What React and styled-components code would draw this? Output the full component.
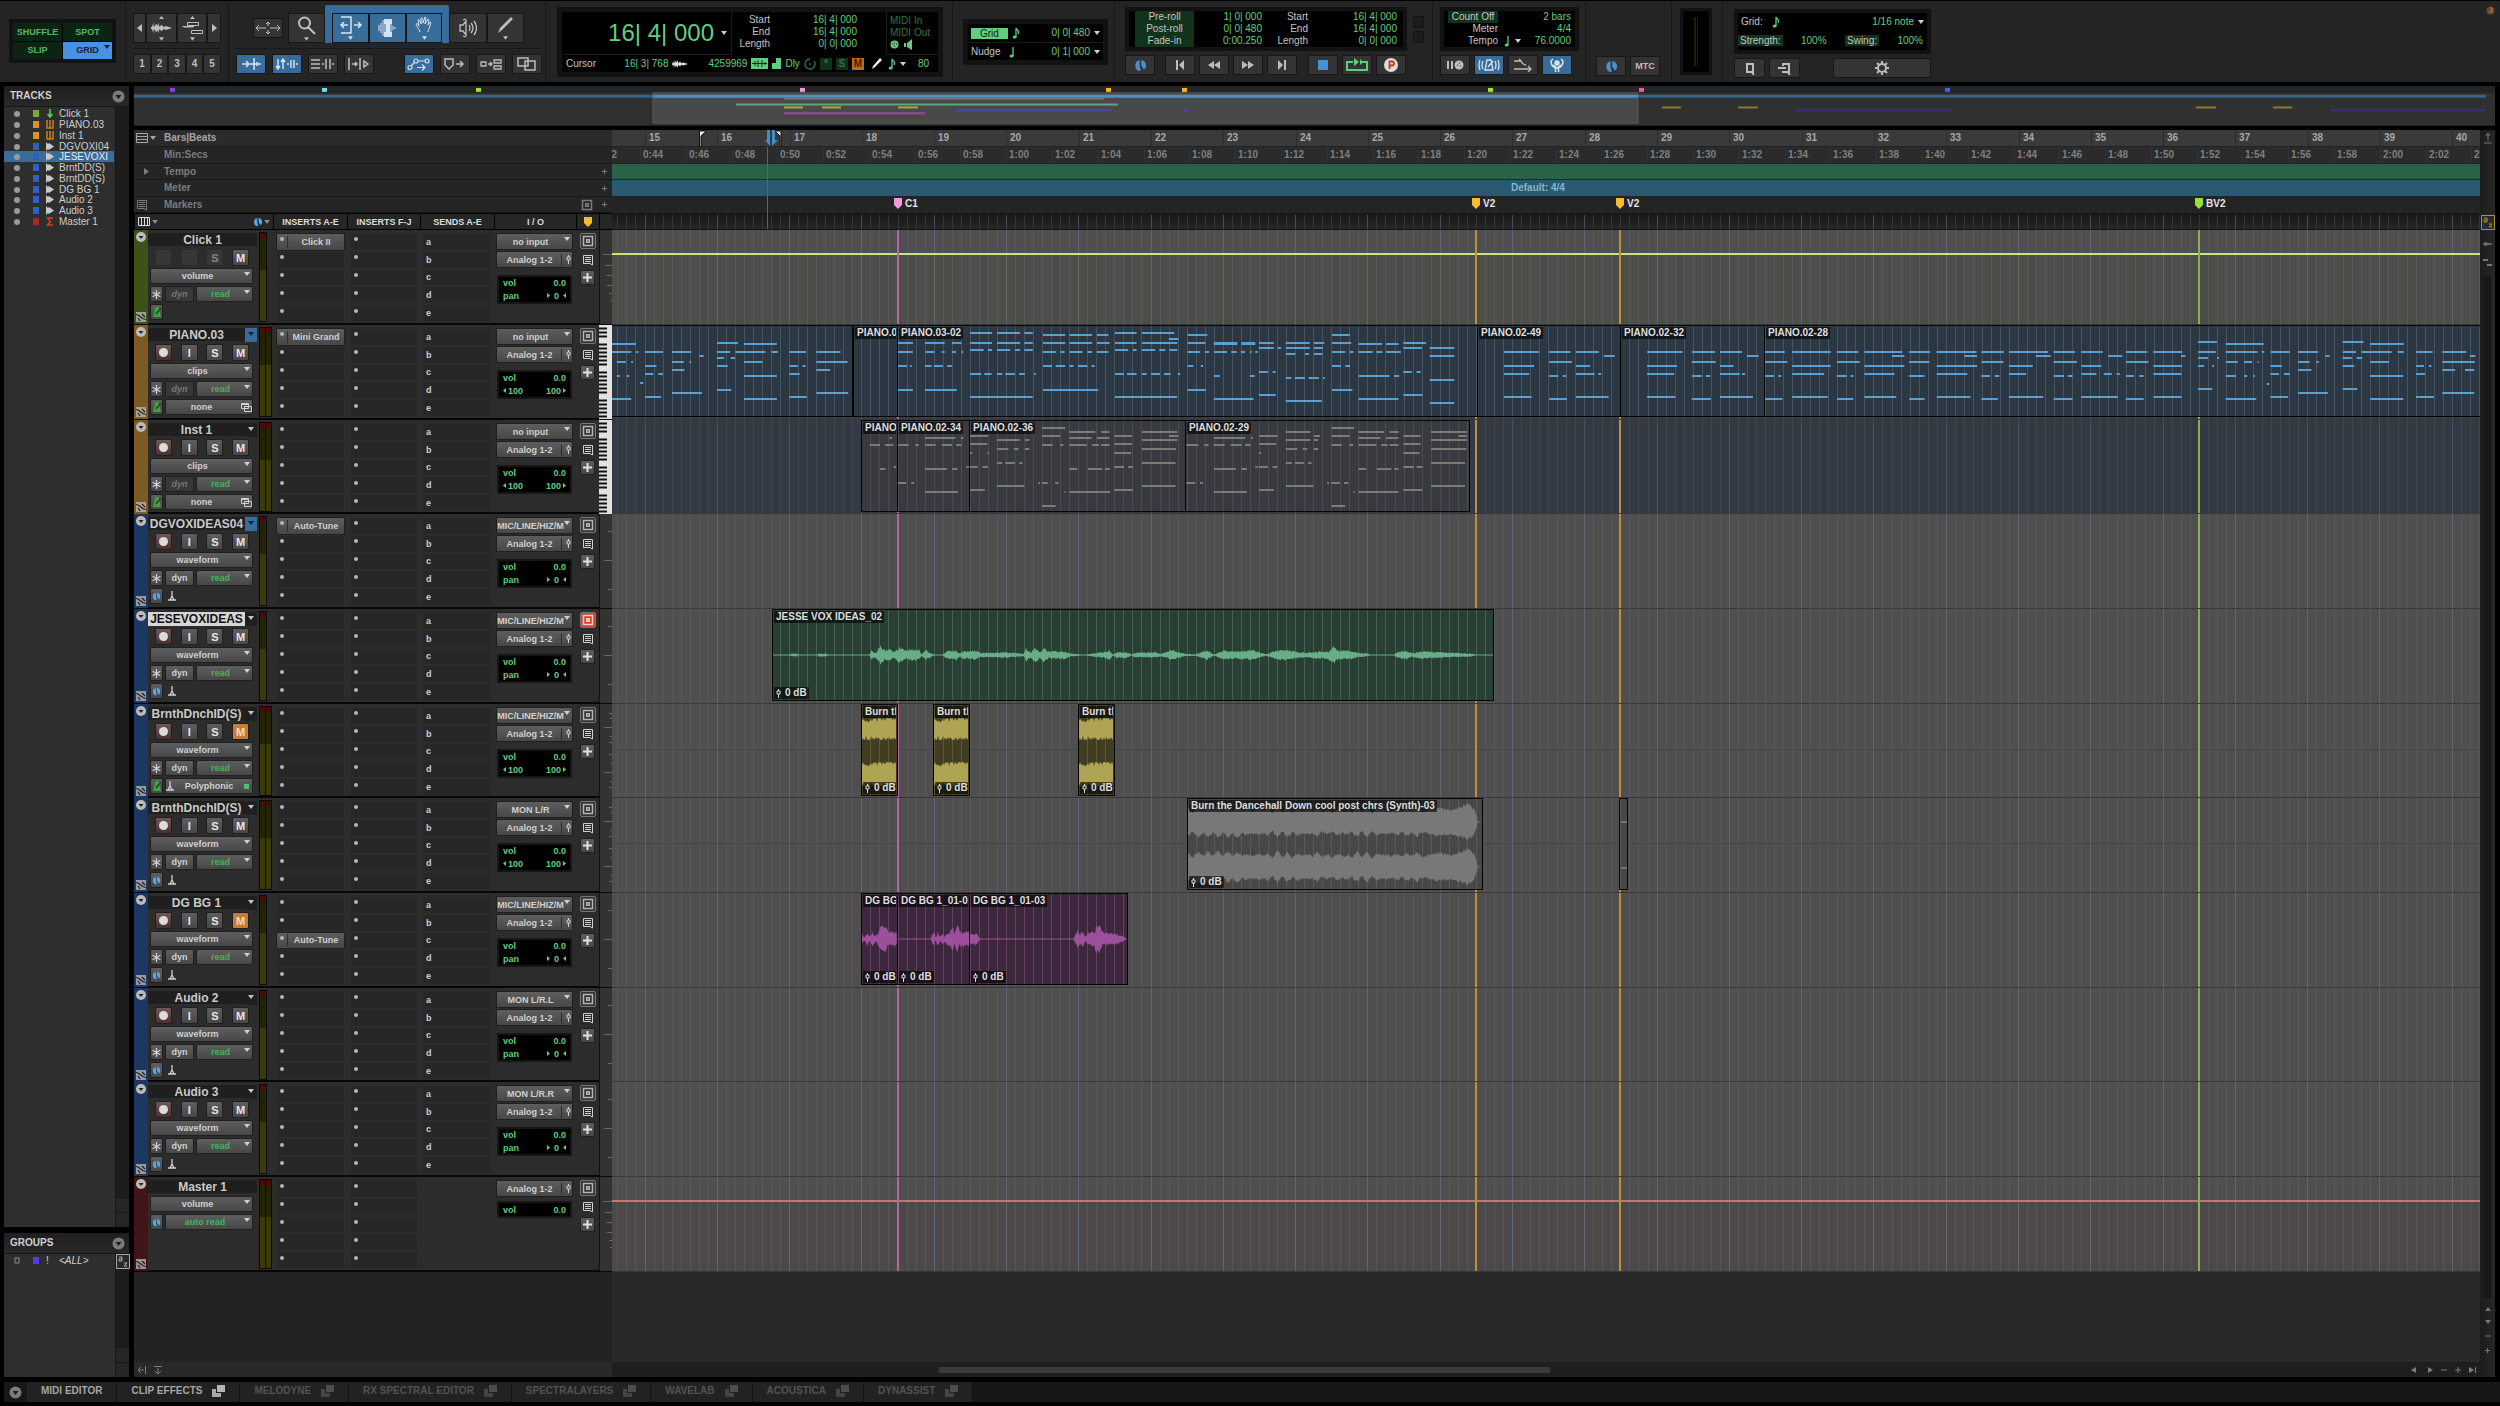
import styled, { createGlobalStyle, css } from "styled-components"

const GlobalStyle = createGlobalStyle`
  * { box-sizing: border-box; }
  body {
    margin: 0;
    background: #000;
    color: #cfcfcf;
    font: 10px/12px "Liberation Sans", Arial, sans-serif;
  }
  button, select, input { font: inherit; color: inherit; margin: 0; padding: 0; border: 0; background: none; }
  svg { display: block; flex: none; }
  h2, h3 { margin: 0; font: inherit; }
  ul { margin: 0; padding: 0; list-style: none; }
`

// timeline scale
const BAR = 72.29
const ORIGIN = 33
const SECOND = BAR / (4 * 60 / 76)

const range = (n) => Array.from({ length: n }, (_, i) => i)
const barX = (bar) => ORIGIN + (bar - 15) * BAR

const vLines = (xs) => xs.map((x) => `M${Math.floor(x) + 0.5} 0V100`).join("")
const GRID_FINE = vLines(range(260).filter((i) => (i - 4) % 8 !== 0).map((i) => ORIGIN + (i - 4) * BAR / 8))
const GRID_BAR = vLines(range(32).map((i) => ORIGIN + i * BAR))

/* ---------- icons ---------- */

const Stroke = ({ w = 16, h = w, d, width = 2, color = "currentColor", fill = "none", box }) => (
  <svg width={w} height={h} viewBox={box || `0 0 ${w} ${h}`} fill={fill} stroke={color} strokeWidth={width}><path d={d}/></svg>
)
const Fill = ({ w = 16, h = w, d, color = "currentColor", box }) => (
  <svg width={w} height={h} viewBox={box || `0 0 ${w} ${h}`} fill={color}><path d={d}/></svg>
)

const Caret = ({ w = 6, color }) => <Fill w={w} h={4} box="0 0 6 4" d="M0 0H6L3 4Z" color={color}/>
const Note = ({ color = "#63cd7f", flag }) => (
  <svg width="8" height="12" viewBox="0 0 8 12">
    <path d={flag ? "M4 10V1C5 4 8 3 6 7" : "M4 10V1"} stroke={color} fill="none" strokeWidth="1.3"/>
    <ellipse cx="2.6" cy="10" rx="2" ry="1.5" fill={color}/>
  </svg>
)
const Clock = ({ size = 10, color = "#55a8ec" }) => (
  <svg width={size} height={size} viewBox="0 0 10 10">
    <path d="M4.3 1A4.2 4.2 0 0 0 5.2 9.3L4.3 5Z" fill={color}/>
    <path d="M5.6 .8A4.2 4.2 0 0 1 7.6 8.3L5.6 5Z" fill={color}/>
  </svg>
)
const Metronome = () => (
  <svg width="10" height="10" viewBox="0 0 10 10">
    <path d="M3.5 0H6.5L9 10H1Z" fill="#38a838"/>
    <path d="M4 7L9 1" stroke="#333" strokeWidth="1.4"/>
  </svg>
)
const Fader = () => <Stroke w={5} h={9} width={1} d="M2.5 0V2M2.5 5V9M1 2H4V5H1Z"/>
const Windows = () => <Stroke w={11} h={9} width={1} d="M.5 .5H7.5V5.5H.5ZM3.5 3.5H10.5V8.5H3.5ZM.5 1.5H7.5"/>
const WaveGlyph = ({ w = 14, h = 12, color }) => (
  <Fill w={w} h={h} box="0 0 20 12" color={color} d="M0 5H1V2L2 5L3 0V5L5 2L6 4L7 1L8 5L10 3L12 5L14 4L20 6L14 8L12 7L10 9L8 7L7 11L6 8L5 10L3 7V12L2 7L1 10V7H0Z"/>
)
const Comment = () => <Stroke w={12} h={12} width={1} d="M1.5 1.5H10.5V11L8 9.5H1.5ZM3 3.5H9M3 5.5H9M3 7.5H9"/>
const Target = () => <Stroke w={12} h={12} width={1.5} d="M1.5 1.5H10.5V10.5H1.5ZM4.7 4.7H7.3V7.3H4.7Z"/>
const Elastic = () => (
  <svg width="10" height="10" viewBox="0 0 10 10">
    <path d="M0 0H10V10H0Z" fill="currentColor" opacity=".75"/>
    <path d="M0 2.5C4 2.5 5 7.5 10 7.5M2 6L4 9M6 2L9 5" stroke="#222" fill="none" strokeWidth="1.2"/>
  </svg>
)
const PopOut = ({ lit }) => (
  <svg width="13" height="12" viewBox="0 0 13 12">
    <path d="M5 0H13V7H5Z" fill={lit ? "#b4b4b4" : "#4c4c4c"}/>
    <path d="M0 4H4V8H9V12H0Z" fill={lit ? "#a8a8a8" : "#444"}/>
  </svg>
)

/* ---------- toolbar ---------- */

const Page = styled.div`
  display: flex;
  flex-direction: column;
  min-height: 100vh;
  overflow: hidden;
`

const Toolbar = styled.header`
  display: flex;
  height: 82px;
  border-top: 1px solid #000;
  background: #242424;
`

const Section = styled.section`
  display: flex;
  flex-direction: column;
  gap: ${(p) => p.$gap || 4}px;
  width: ${(p) => p.$w}px;
  padding: ${(p) => p.$pad || "6px 11px"};
  border-right: ${(p) => (p.$last ? 0 : 1)}px solid #181818;
  flex: none;
`

const Row = styled.div`
  display: flex;
  align-items: center;
  gap: ${(p) => p.$gap || 0}px;
  ${(p) => p.$push && "margin-left: auto;"}
`

const Spacer = styled.i`
  width: ${(p) => p.$w}px;
  flex: none;
`

const Display = styled.div`
  width: ${(p) => (p.$w ? `${p.$w}px` : "auto")};
  border: ${(p) => p.$edge || 4}px solid #121212;
  background: #000;
  color: #63cd7f;
`

const ModeGrid = styled(Display)`
  display: grid;
  grid-template-columns: 1fr 1fr;
  height: 44px;
  margin: 12px 0 0;
  gap: 1px;
`

const Mode = styled.button`
  position: relative;
  background: ${(p) => (p.$on ? "#4a8fe0" : "#0c2413")};
  color: ${(p) => (p.$on ? "#10233c" : "#55b56e")};
  font-size: 9px;
  font-weight: bold;
  & > svg { position: absolute; right: 2px; top: 3px; }
`

const ToolButton = styled.button`
  display: flex;
  flex-direction: column;
  align-items: center;
  justify-content: center;
  gap: 2px;
  width: ${(p) => p.$w || 30}px;
  height: ${(p) => p.$h || 20}px;
  border: 1px solid #171717;
  background: ${(p) => (p.$on ? "#376c9b" : "#343434")};
  color: ${(p) => (p.$on ? "#d5e3ee" : "#bdbdbd")};
  font-size: ${(p) => (p.$small ? 9 : 10)}px;
  font-weight: bold;
`

const SmartTool = styled.div`
  display: flex;
  padding: 8px 7px 0;
  margin-top: -8px;
  border-radius: 2px 2px 0 0;
  background: #376c9b;
`

const Split = styled.hr`
  width: 100%;
  margin: 0;
  border: 0;
  border-top: 1px solid #181818;
`

const Counter = styled(Display)`
  display: grid;
  grid-template-columns: 170px 130px 24px 1fr;
  grid-template-rows: 43px 17px;
  height: 70px;
  border-width: 5px;
`

const MainTime = styled.div`
  display: flex;
  align-items: center;
  justify-content: flex-end;
  gap: 7px;
  padding-right: 4px;
  border-right: 1px solid #1c1c1c;
  border-bottom: 1px solid #1c1c1c;
  font-size: 24px;
  line-height: 24px;
  color: #63cd7f;
`

const Pairs = styled.dl`
  display: grid;
  grid-template-columns: ${(p) => p.$cols || "auto auto"};
  grid-auto-rows: 12px;
  margin: 0;
  padding: ${(p) => p.$pad || 0};
  text-align: right;
  dt { color: #c4c4c4; }
  dd { margin: 0; color: #63cd7f; }
`

const Tag = styled.span`
  padding: 0 ${(p) => p.$x || 3}px;
  background: ${(p) => (p.$solid ? "#63cd7f" : "#11331c")};
  color: ${(p) => (p.$solid ? "#0b2412" : "#63cd7f")};
  text-align: center;
  line-height: 11px;
`

const StatusRow = styled.div`
  display: flex;
  grid-column: 1 / -1;
  align-items: center;
  gap: 4px;
  padding: 0 9px 0 4px;
  color: #63cd7f;
  span:first-child { color: #c4c4c4; margin-right: auto; }
`

const StatusBox = styled.span`
  width: 12px;
  height: 12px;
  text-align: center;
  background: ${(p) => (p.$hot ? "#c0691c" : "#10301a")};
  color: ${(p) => (p.$hot ? "#3c1c00" : "#2f7442")};
  font-weight: bold;
`

const MidiStatus = styled.div`
  padding: 3px 0 0 3px;
  color: #2f7442;
  white-space: nowrap;
  border-left: 1px solid #1c1c1c;
  border-bottom: 1px solid #1c1c1c;
`

const GridRow = styled.div`
  display: flex;
  align-items: center;
  gap: 4px;
  height: 18px;
  padding: 0 3px;
  & + & { border-top: 1px solid #1c1c1c; }
  span:last-of-type { margin-left: auto; }
`

const Strength = styled.div`
  display: flex;
  align-items: center;
  justify-content: space-between;
  height: 19px;
  padding-right: 4px;
`

const Name = styled.span`
  color: #c4c4c4;
  ${(p) => p.$w && `width: ${p.$w}px;`}
`

const LevelMeter = styled.div`
  display: flex;
  gap: 1px;
  width: 32px;
  height: 69px;
  padding: 6px 11px;
  border: 3px solid #121212;
  background: #000;
  i { flex: 1; background: linear-gradient(#4a0a0a 3px, #1d1f08 3px); }
`

const Grow = styled.div`
  flex: 1;
`

const Corner = styled.div`
  padding: 5px;
`

const bars = (x) => `M${x} 7V13M${x + 2} 5V15M${x + 4} 2V18M${x + 6} 4V16M${x + 8} 1V19M${x + 10} 6V14M${x + 12} 4V16M${x + 14} 8V12M${x + 16} 9V11`

function TopBar() {
  return (
    <Toolbar>
      <Section $w={126} $pad="6px 9px">
        <ModeGrid>
          <Mode>SHUFFLE</Mode>
          <Mode>SPOT</Mode>
          <Mode>SLIP</Mode>
          <Mode $on>GRID<Caret color="#10233c"/></Mode>
        </ModeGrid>
      </Section>

      <Section $w={103} $pad="12px 7px" $gap={5}>
        <Row>
          <ToolButton $w={13} $h={30} aria-label="zoom out"><Fill w={5} h={8} d="M5 0V8L0 4Z"/></ToolButton>
          <ToolButton $w={31} $h={30} aria-label="zoom waveform">
            <Fill w={5} h={3} d="M0 3L2.5 0L5 3Z"/>
            <WaveGlyph w={21} h={14}/>
            <Caret w={5}/>
          </ToolButton>
          <ToolButton $w={30} $h={30} aria-label="zoom midi">
            <Fill w={5} h={3} d="M0 3L2.5 0L5 3Z"/>
            <Stroke w={21} h={14} width={1} d="M5.5 1.5H16.5V4.5H5.5ZM.5 5.5H12M1.5 6H11M9.5 9.5H20.5V12.5H9.5Z"/>
            <Caret w={5}/>
          </ToolButton>
          <ToolButton $w={14} $h={30} aria-label="zoom in"><Fill w={5} h={8} d="M0 0V8L5 4Z"/></ToolButton>
        </Row>
        <Split/>
        <Row>
          {[1, 2, 3, 4, 5].map((n) => <ToolButton key={n} $w={n % 2 ? 18 : 17}>{n}</ToolButton>)}
        </Row>
      </Section>

      <Section $w={317} $pad="12px 3px 12px 7px" $gap={5}>
        <Row>
          <Row $gap={5}>
            <Spacer $w={12}/>
            <ToolButton aria-label="trim"><Stroke w={26} h={14} width={1} d="M1 7H11M4 4L1 7L4 10M15 7H25M22 4L25 7L22 10M13 1V5M11 3L13 1L15 3M13 9V13M11 11L13 13L15 11"/></ToolButton>
            <ToolButton $w={37} $h={30} aria-label="zoomer">
              <Stroke w={20} h={19} width={2} d="M13 7A5.5 5.5 0 1 1 2 7A5.5 5.5 0 1 1 13 7M11 11L18 18"/>
              <Caret w={5}/>
            </ToolButton>
          </Row>
          <SmartTool>
            <ToolButton $on $w={37} $h={30} aria-label="trimmer">
              <Stroke w={24} h={18} width={1.5} d="M2 1H12V17H2M9 9H2M5 6L2 9L5 12M15 9H22M19 6L22 9L19 12"/>
              <Caret w={5}/>
            </ToolButton>
            <ToolButton $on $w={37} $h={30} aria-label="selector">
              <svg width="22" height="20" viewBox="0 0 22 20" fill="#d5e3ee"><path d="M7 1H15V6H13V14H15V19H7V14H9V6H7Z"/><path d={bars(2)} stroke="#d5e3ee"/></svg>
            </ToolButton>
            <ToolButton $on $w={36} $h={30} aria-label="grabber">
              <Stroke w={18} h={18} width={1} d="M5 16C4 12 1 10 1 8C2 7 3 8 4 10L3 4C4 3 5 4 6 8L6 2C7 1 8 2 8 7L10 1C11 1 11 2 10 8L13 3C14 3 14 4 13 9L15 6C16 6 16 7 15 10C14 13 13 14 13 16"/>
              <Caret w={5}/>
            </ToolButton>
          </SmartTool>
          <ToolButton $w={38} $h={30} aria-label="scrubber"><Stroke w={18} h={20} width={1.3} d="M1 7H4L7 3V17L4 13H1ZM4 2L7 1M4 18L7 19M10 7Q12 10 10 13M12 5Q16 10 12 15M15 3Q20 10 15 17"/></ToolButton>
          <ToolButton $w={37} $h={30} aria-label="pencil">
            <Fill w={16} h={18} d="M0 17L2 12L13 1L15 3L4 14Z"/>
            <Caret w={5}/>
          </ToolButton>
        </Row>
        <Split/>
        <Row $gap={6}>
          <ToolButton $on aria-label="tab to transient"><Stroke w={20} h={14} width={1.5} d="M1 7H8M5 4L8 7L5 10M9 7H20M13 1V13M16 5V9"/></ToolButton>
          <ToolButton $on aria-label="link track"><Stroke w={24} h={14} width={1.5} d="M3 2V12M1 9L3 12L5 9M8 12V2M6 5L8 2L10 5M12 7H14M16 3V11M19 3V11M21 7H23"/></ToolButton>
          <ToolButton aria-label="mirror"><Stroke w={24} h={14} width={1.5} d="M0 3H9M0 7H9M0 11H9M11 7H13M15 2V12M19 2V12M21 7H23"/></ToolButton>
          <ToolButton aria-label="insertion follows"><Stroke w={22} h={14} width={1.5} d="M1 1V13M4 7H9M7 5L9 7L7 9M12 1V13M16 4L20 7L16 10Z"/></ToolButton>
          <Grow/>
          <ToolButton $on aria-label="automation follows">
            <Stroke w={24} h={14} width={1.2} d="M1 10.5A2 2 0 1 0 5 10.5A2 2 0 1 0 1 10.5M7 4A2 2 0 1 0 11 4A2 2 0 1 0 7 4M18 4A2 2 0 1 0 22 4A2 2 0 1 0 18 4M4 9L7.5 5.5M11 4H18M10 10.5H18M15 7.5L18 10.5L15 13.5"/>
          </ToolButton>
          <ToolButton aria-label="track marker"><Stroke w={22} h={14} width={1.5} d="M1 2H9V8L5 12L1 8ZM12 7H19M16 4L19 7L16 10"/></ToolButton>
          <ToolButton aria-label="group"><Stroke w={22} h={14} width={1.3} d="M1 5H6V9H1ZM8 7H12M10 5L12 7L10 9M14 3H21V6H14ZM14 9H21V12H14Z"/></ToolButton>
          <ToolButton aria-label="layered editing"><Stroke w={20} h={14} width={1.5} d="M1 1H11V9H1ZM8 4H18V13H8Z"/></ToolButton>
        </Row>
      </Section>

      <Section $w={407} $pad="6px 9px 6px 11px">
        <Counter>
          <MainTime>16| 4| 000 <Caret color="#cfcfcf"/></MainTime>
          <Pairs $cols="38px 1fr" $pad="2px 5px 0 0">
            <dt>Start</dt><dd>16| 4| 000</dd>
            <dt>End</dt><dd>16| 4| 000</dd>
            <dt>Length</dt><dd>0| 0| 000</dd>
          </Pairs>
          <span/>
          <MidiStatus>
            MIDI In<br/>MIDI Out
            <Row $gap={5}>
              <svg width="9" height="9"><circle cx="4.5" cy="4.5" r="4" fill="#63cd7f"/><path d="M2 4H3M4 3H5M6 4H7M4 6H5" stroke="#000"/></svg>
              <Fill w={9} h={11} color="#63cd7f" d="M0 4H2V8H0ZM3 4L8 0V11L3 8Z"/>
            </Row>
          </MidiStatus>
          <StatusRow>
            <span>Cursor</span>
            <span>16| 3| 768</span>
            <WaveGlyph w={16} h={10} color="#ddd"/>
            <Spacer $w={12}/>
            <span>4259969</span>
            <svg width="17" height="11"><path d="M0 0H17V11H0Z" fill="#63cd7f"/><path d="M1 5.5H16M4 3V8M7 2V9M11 2V9M14 4V7" stroke="#10301a"/></svg>
            <Fill w={9} h={11} color="#63cd7f" d="M4 0H9V11H0V5H4Z"/>
            <span>Dly</span>
            <Stroke w={12} color="#2f7442" width={1.3} d="M6 1A5 5 0 1 0 10 3M6 5V7"/>
            <StatusBox>*</StatusBox>
            <StatusBox>S</StatusBox>
            <StatusBox $hot>M</StatusBox>
            <Fill w={16} h={11} box="-4 0 16 11" color="#eee" d="M0 11L1 8L8 0L10 2L3 9Z"/>
            <Note flag/>
            <Caret color="#cfcfcf"/>
            <Spacer $w={4}/>
            <span>80</span>
          </StatusRow>
        </Counter>
      </Section>

      <Section $w={162} $pad="18px 6px 0 10px">
        <Display $edge={5}>
          <GridRow><Tag $solid $x={9}>Grid</Tag><Note flag/><span>0| 0| 480</span><Caret color="#cfcfcf"/></GridRow>
          <GridRow><Name $w={34}>Nudge</Name><Note/><span>0| 1| 000</span><Caret color="#cfcfcf"/></GridRow>
        </Display>
      </Section>

      <Section $w={318} $pad="6px 8px 6px 10px">
        <Row $gap={6}>
          <Display $w={282}>
            <Pairs $cols="59px 68px 46px 1fr" $pad="0 6px 0 6px">
              <Tag as="dt">Pre-roll</Tag><dd>1| 0| 000</dd><dt>Start</dt><dd>16| 4| 000</dd>
              <Tag as="dt">Post-roll</Tag><dd>0| 0| 480</dd><dt>End</dt><dd>16| 4| 000</dd>
              <Tag as="dt">Fade-in</Tag><dd>0:00.250</dd><dt>Length</dt><dd>0| 0| 000</dd>
            </Pairs>
          </Display>
          <svg width="11" height="27"><path d="M.5 .5H10.5V11.5H.5ZM.5 15.5H10.5V26.5H.5Z" fill="#1c1c1c" stroke="#121212"/></svg>
        </Row>
        <Row $gap={4}>
          <ToolButton aria-label="online"><Clock size={13} color="#4a8fce"/></ToolButton>
          <Spacer $w={2}/>
          <ToolButton aria-label="return to zero"><Fill w={8} h={10} d="M0 0H2V10H0ZM8 0V10L3 5Z"/></ToolButton>
          <ToolButton aria-label="rewind"><Fill w={12} h={8} d="M6 0V8L0 4ZM12 0V8L6 4Z"/></ToolButton>
          <ToolButton aria-label="fast forward"><Fill w={12} h={8} d="M0 0V8L6 4ZM6 0V8L12 4Z"/></ToolButton>
          <ToolButton aria-label="go to end"><Fill w={8} h={10} d="M6 0H8V10H6ZM0 0V10L5 5Z"/></ToolButton>
          <Spacer $w={3}/>
          <ToolButton aria-label="stop"><Fill w={10} color="#4a8fce" d="M0 0H10V10H0Z"/></ToolButton>
          <ToolButton aria-label="loop playback">
            <svg width="22" height="14" viewBox="0 0 22 14"><path d="M7 4H1V12H21V4H15" fill="none" stroke="#63cd7f" strokeWidth="2"/><path d="M8 0L13 4L8 8ZM14 1V7L17 4Z" fill="#63cd7f"/></svg>
          </ToolButton>
          <ToolButton aria-label="record"><svg width="14" height="14"><circle cx="7" cy="7" r="7" fill="#dcdcdc"/><path d="M5.5 11V3.5H8A2 2 0 0 1 8 7.5H6" stroke="#c23b28" strokeWidth="1.8" fill="none"/></svg></ToolButton>
        </Row>
      </Section>

      <Section $w={153} $pad="6px 6px 6px 7px">
        <Display>
          <Pairs $cols="50px 30px 1fr" $pad="0 4px 0 4px">
            <Tag as="dt" $x={1}>Count Off</Tag><dt/><dd>2 bars</dd>
            <dt>Meter</dt><dt/><dd>4/4</dd>
            <dt>Tempo</dt><dt><Row $gap={3} $push><Spacer $w={3}/><Note/><Caret color="#cfcfcf"/></Row></dt><dd>76.0000</dd>
          </Pairs>
        </Display>
        <Row $gap={4}>
          <ToolButton aria-label="wait for note"><svg width="18" height="12" fill="#bdbdbd"><path d="M1 2H3V10H1ZM5 2H7V10H5Z"/><circle cx="13" cy="6" r="4.5"/><path d="M11 6H12M13 4H14M14 7H15" stroke="#333"/></svg></ToolButton>
          <ToolButton $on aria-label="metronome"><Stroke w={22} h={14} width={1.3} d="M9 2H13L15 12H7ZM10 9L15 3M5 3Q3 7 5 11M2 2Q0 7 2 12M17 3Q19 7 17 11M20 2Q22 7 20 12"/></ToolButton>
          <ToolButton aria-label="midi merge"><Stroke w={18} h={14} width={1.3} d="M0 3H7Q9 7 12 7M5 1L7 3M0 11H17M14 8L17 11L14 14"/></ToolButton>
          <ToolButton $on aria-label="tempo map">
            <svg width="16" height="16" viewBox="0 0 16 16" fill="none" stroke="#d5e3ee" strokeWidth="1.5"><path d="M6.5 15V11Q2 9 2 4L4 2M9.5 15V11Q14 9 14 4L12 2M4 8L8 11L12 8"/><circle cx="8" cy="6" r="2" fill="#d5e3ee"/></svg>
          </ToolButton>
        </Row>
      </Section>

      <Section $w={86} $pad="55px 10px 0">
        <Row $gap={4}>
          <ToolButton aria-label="sync"><Clock size={13} color="#4a8fce"/></ToolButton>
          <ToolButton $small>MTC</ToolButton>
        </Row>
      </Section>

      <Section $w={51} $pad="7px 8px">
        <LevelMeter><i/><i/></LevelMeter>
      </Section>

      <Section $last $w={219} $pad="8px 11px" $gap={4}>
        <Display>
          <GridRow><Name>Grid:</Name><Spacer $w={1}/><Note flag/><span>1/16 note</span><Caret color="#cfcfcf"/></GridRow>
          <Strength>
            <Tag $x={2}><Name>Strength:</Name></Tag><span>100%</span>
            <Tag $x={2}><Name>Swing:</Name></Tag><span>100%</span>
          </Strength>
        </Display>
        <Row $gap={4}>
          <ToolButton $w={31} aria-label="quantize"><Stroke w={10} h={13} width={2} d="M2 2H8V10H2ZM6 9L9 13"/></ToolButton>
          <ToolButton $w={31} aria-label="apply quantize"><Stroke w={14} h={13} width={2} d="M5 4V2H11V10H5V9M9 9L12 13M0 6H8"/></ToolButton>
          <Grow/>
          <ToolButton $w={98} aria-label="settings">
            <Stroke w={14} h={14} width={2} d="M7 3A4 4 0 1 1 7 11A4 4 0 1 1 7 3M7 0V3M7 11V14M0 7H3M11 7H14M2 2L4 4M10 10L12 12M2 12L4 10M10 4L12 2"/>
          </ToolButton>
        </Row>
      </Section>
      <Grow/>
      <Corner>
        <svg width="9" height="9"><circle cx="4.5" cy="4.5" r="4" fill="#6a452c"/><path d="M4 2H6V6H3" stroke="#b67a4e" fill="none"/></svg>
      </Corner>
    </Toolbar>
  )
}

/* ---------- sidebar ---------- */

const Body = styled.div`
  display: flex;
  flex: 1;
  gap: 5px;
  padding: 4px 5px 5px 4px;
`

const Sidebar = styled.aside`
  display: flex;
  flex-direction: column;
  gap: 6px;
  width: 125px;
  flex: none;
`

const Panel = styled.section`
  display: flex;
  flex-direction: column;
  ${(p) => (p.$h ? `height: ${p.$h}px;` : "flex: 1;")}
  background: #2e2e2e;
`

const PanelHead = styled.h2`
  display: flex;
  align-items: center;
  justify-content: space-between;
  height: 21px;
  padding: 0 4px 0 6px;
  border-bottom: 1px solid #161616;
  background: linear-gradient(#1f1f1f, #282828);
  font-weight: bold;
`

const PanelBody = styled.div`
  display: flex;
  flex: 1;
`

const TrackNames = styled.ul`
  flex: 1;
  padding-top: 1px;
  margin-right: 1px;
`

const TrackName = styled.li`
  display: grid;
  grid-template-columns: 23px 9px 13px 1fr;
  align-items: center;
  height: 11px;
  padding-left: 10px;
  line-height: 11px;
  white-space: nowrap;
  &:nth-child(4n) { height: 10px; }
  ${(p) => p.$on && "background: #376c9b; color: #e4edf4;"}
`

const Dot = styled.i`
  width: 6px;
  height: 6px;
  border-radius: 50%;
  background: #9a9a9a;
`

const Swatch = styled.i`
  width: 6px;
  height: 7px;
  margin-left: -4px;
  background: ${(p) => p.$c};
`

const Gutter = styled.div`
  width: 14px;
  background: #1d1d1d;
  border-left: 1px solid #161616;
  display: flex;
  flex-direction: column;
  justify-content: flex-end;
`

const GutterEnd = styled.i`
  height: 15px;
  border-top: 1px solid #161616;
  background: #262626;
`

const MenuDot = () => (
  <svg width="13" height="13" viewBox="0 0 13 13"><circle cx="6.5" cy="6.5" r="6" fill="#7b7b7b"/><path d="M3.5 5H9.5L6.5 9Z" fill="#1a1a1a"/></svg>
)
const SortBadge = ({ c = "#aaa" }) => (
  <svg width="14" height="15" viewBox="0 0 14 15">
    <path d="M.5 .5H13.5V14.5H.5Z" fill="#2a2a2a" stroke={c}/>
    <path d="M3 3H6V7H3V5H6M8 9H11L8 12H11" stroke={c} fill="none"/>
  </svg>
)

const listIcons = {
  click: <Stroke w={8} h={9} width={1.5} color="#59dd4c" d="M4 0V8M1.5 5L4 8L6.5 5"/>,
  inst: <Stroke w={8} h={9} width={1.5} color="#cf7c22" d="M1 0V8H7V0M4 0V8"/>,
  audio: <Fill w={8} h={9} color="#c8c8c8" d="M0 0L2 2L3 1L8 4.5L3 8L2 7L0 9Z"/>,
  master: <Stroke w={8} h={9} width={1.6} color="#e03b1f" d="M7 1H1.5L4.5 4.5L1.5 8H7"/>,
}

const trackList = [
  ["Click 1", "#7bab2d", "click"], ["PIANO.03", "#dd8f2b", "inst"], ["Inst 1", "#dd8f2b", "inst"],
  ["DGVOXI04", "#2b5fc4", "audio"], ["JESEVOXI", "#2b5fc4", "audio"], ["BrntDD(S)", "#2b5fc4", "audio"],
  ["BrntDD(S)", "#2b5fc4", "audio"], ["DG BG 1", "#2b5fc4", "audio"], ["Audio 2", "#2b5fc4", "audio"],
  ["Audio 3", "#2b5fc4", "audio"], ["Master 1", "#a82a20", "master"],
]

function SideBar() {
  return (
    <Sidebar>
      <Panel>
        <PanelHead>TRACKS <MenuDot/></PanelHead>
        <PanelBody>
          <TrackNames>
            {trackList.map(([name, color, kind], i) => (
              <TrackName key={i} $on={name === "JESEVOXI"}>
                <Dot/><Swatch $c={color}/>{listIcons[kind]}<span>{name}</span>
              </TrackName>
            ))}
          </TrackNames>
          <Gutter><GutterEnd/><GutterEnd/></Gutter>
        </PanelBody>
      </Panel>
      <Panel $h={144}>
        <PanelHead>GROUPS <MenuDot/></PanelHead>
        <PanelBody>
          <TrackNames>
            <TrackName><Stroke w={6} h={7} width={1} color="#8a8a8a" d="M1 1H5V6H1Z"/><Swatch $c="#5536f2"/><span>!</span><i>&lt;ALL&gt;</i></TrackName>
          </TrackNames>
          <Gutter><SortBadge/><Grow/><GutterEnd/><GutterEnd/></Gutter>
        </PanelBody>
      </Panel>
    </Sidebar>
  )
}

/* ---------- overview ---------- */

const OverviewBox = styled.div`
  height: 40px;
  background: #303030;
  border-bottom: 1px solid #222;
  svg { width: 100%; height: 100%; }
`

const overviewMarks = [[170, "#8f3ee0"], [322, "#6fdcec"], [476, "#9fe23c"], [800, "#ef9ad8"], [1106, "#f3b62e"], [1182, "#f3b62e"], [1488, "#9fe23c"], [1639, "#ec5f9b"], [1945, "#4d5cf0"]]
const overviewClips = [
  [784, 1104, 12, "#77716e"], [736, 1118, 18, "#5da77a"],
  [784, 803, 21, "#b2a449"], [822, 841, 21, "#b2a449"], [898, 918, 21, "#b2a449"],
  [956, 1111, 24, "#4f42ab"], [1184, 1189, 24, "#4f42ab"], [784, 925, 27, "#a5449f"],
  [1662, 1681, 21, "#877b33"], [1738, 1758, 21, "#877b33"], [2196, 2216, 21, "#877b33"], [2273, 2292, 21, "#877b33"],
  [1795, 1952, 24, "#3b2f7c"], [2330, 2486, 24, "#3b2f7c"],
]

function Overview() {
  return (
    <OverviewBox>
      <svg viewBox="0 0 2361 40" preserveAspectRatio="none">
        <rect width="2361" height="7" fill="#252525"/>
        <rect x="519" y="7" width="985" height="31" fill="#494949" stroke="#5a5a5a"/>
        <rect y="9" width="2352" height="3" fill="#35648a"/>
        <rect x="519" y="9" width="985" height="3" fill="#4f90c4"/>
        {overviewClips.map(([a, b, y, c], i) => <rect key={i} x={a - 134} y={y} width={b - a} height="2" fill={c}/>)}
        {overviewMarks.map(([x, c]) => <rect key={x} x={x - 134} y="2" width="5" height="4" fill={c}/>)}
      </svg>
    </OverviewBox>
  )
}

/* ---------- track headers ---------- */

const Main = styled.main`
  display: flex;
  flex-direction: column;
  gap: 4px;
  flex: 1;
  min-width: 0;
`

const Edit = styled.div`
  display: grid;
  grid-template-columns: 478px 1fr 15px;
  flex: 1;
`

const Column = styled.div`
  display: flex;
  flex-direction: column;
  min-width: 0;
  position: relative;
  background: ${(p) => p.$bg || "#232323"};
`

const rulerRows = css`
  display: grid;
  grid-template-rows: 17px 17px 16px 17px 16px;
`

const RulerNames = styled.ul`
  ${rulerRows}
`

const RulerName = styled.li`
  display: grid;
  grid-template-columns: 28px 1fr 16px 15px;
  align-items: center;
  padding-left: 2px;
  border-bottom: 1px solid #191919;
  background: ${(p) => (p.$on ? "#2b2b2b" : "#252525")};
  color: ${(p) => (p.$on ? "#a5a5a5" : "#7c7c7c")};
  font-weight: bold;
  & > svg:last-child { justify-self: center; }
`

const ColumnHeads = styled.div`
  display: grid;
  grid-template-columns: 126px 13px 74px 73px 74px 82px 23px 13px;
  height: 17px;
  background: #000;
  font-size: 9px;
  font-weight: bold;
  color: #dcdcdc;
  text-align: center;
`

const ColumnHead = styled.div`
  display: flex;
  align-items: center;
  justify-content: ${(p) => (p.$wide ? "space-between" : "center")};
  margin: 1px 0 1px 1px;
  padding: 0 ${(p) => (p.$wide ? 3 : 0)}px;
  background: #262626;
  ${(p) => p.$wide && "grid-column: span 2;"}
`

const rowHeight = css`
  height: 95px;
  &:nth-child(3n) { height: 94px; }
`

const Strip = styled.article`
  ${rowHeight}
  display: grid;
  grid-template-columns: 14px 111px 14px 74px 73px 74px 82px 23px 13px;
  border-bottom: 2px solid #070707;
  background: #2c2c2c;
  font-size: 9px;
  font-weight: bold;
`

const ColorTab = styled.div`
  display: flex;
  flex-direction: column;
  justify-content: space-between;
  align-items: center;
  padding: 2px 0 2px;
  background: ${(p) => p.$c};
  color: #bbb;
`

const Controls = styled.div`
  display: flex;
  flex-direction: column;
  gap: 4px;
  padding: 3px 7px 0 3px;
`

const NameBar = styled.h3`
  display: flex;
  align-items: center;
  height: 13px;
  margin: 0 -5px 0 -3px;
  background: #1f1f1f;
  color: #c9c9c9;
  font-size: 12px;
  font-weight: bold;
  span {
    flex: 1;
    height: 14px;
    line-height: 14px;
    text-align: center;
    white-space: nowrap;
    ${(p) => p.$on && "background: #d6d6d6; color: #111;"}
  }
`

const NameMenu = styled.button`
  display: flex;
  align-items: flex-start;
  justify-content: center;
  width: 12px;
  height: 14px;
  padding-top: 4px;
  background: ${(p) => (p.$on ? "#376c9b" : "#1f1f1f")};
  color: ${(p) => (p.$on ? "#10233c" : "#c4c4c4")};
`

const raised = css`
  border-radius: 1px;
  background: linear-gradient(#5e5e5e, #474747);
  box-shadow: 0 0 0 1px #1f1f1f;
  color: #d0d0d0;
`

const Squares = styled.div`
  display: flex;
  justify-content: space-between;
  padding: 0 4px 0 5px;
`

const Square = styled.button`
  ${raised}
  display: flex;
  align-items: center;
  justify-content: center;
  width: 15px;
  height: 15px;
  font-size: 11px;
  font-weight: bold;
  color: #e6e6e6;
  ${(p) => p.$rec && "background: linear-gradient(#705756, #4a2f2e);"}
  ${(p) => p.$hot && "background: #cb7c33; color: #f3dcc0;"}
  ${(p) => p.$off && "background: #373737; box-shadow: none; color: #888;"}
`

const Line = styled.div`
  display: flex;
  gap: 4px;
  height: ${(p) => p.$h || 14}px;
`

const Key = styled.button`
  ${raised}
  display: flex;
  align-items: center;
  justify-content: center;
  flex: ${(p) => (p.$w ? "none" : 1)};
  width: ${(p) => p.$w || 0}px;
  height: ${(p) => p.$h || 14}px;
  gap: 4px;
  ${(p) => p.$dim && "background: #383838; color: #777; font-style: italic;"}
`

const Menu = styled.label`
  ${raised}
  position: relative;
  display: block;
  flex: 1;
  min-width: 0;
  height: ${(p) => p.$h || 14}px;
  &::after {
    content: "";
    position: absolute;
    top: 3px;
    right: 2px;
    border: 3px solid transparent;
    border-top: 4px solid #d0d0d0;
    border-bottom: 0;
    pointer-events: none;
  }
  select {
    appearance: none;
    width: 100%;
    height: 100%;
    padding-right: 8px;
    font-weight: bold;
    color: ${(p) => (p.$green ? "#4db05c" : "#d0d0d0")};
    text-align-last: center;
  }
`

const Dropdown = ({ label, value, ...rest }) => (
  <Menu {...rest}><select aria-label={label} defaultValue={value}><option>{value}</option></select></Menu>
)

const Meter = styled.div`
  display: flex;
  gap: 1px;
  width: ${(p) => (p.$stereo ? 13 : 8)}px;
  margin: 2px 0 2px;
  padding: 1px;
  background: #0a0a0a;
  i { flex: 1; background: linear-gradient(#4a0a0a 5px, #222405 5px, #222405 42%, #3b3a0a 42%); }
`

const Slots = styled.div`
  display: grid;
  grid-template-rows: repeat(5, 1fr);
  padding: 4px 3px 1px ${(p) => p.$left || 4}px;
`

const Slot = styled.div`
  display: flex;
  align-items: center;
  padding-left: 3px;
  margin-bottom: 2px;
  background: #272727;
  i { width: 4px; height: 4px; margin-bottom: 5px; border-radius: 50%; background: #b5b5b5; }
`

const Insert = styled.button`
  ${raised}
  display: flex;
  align-items: center;
  padding-left: 3px;
  margin-bottom: 2px;
  i { width: 4px; height: 4px; margin-bottom: 5px; border-radius: 50%; background: #b5b5b5; }
  span { flex: 1; margin-left: 3px; border-left: 1px solid #2c2c2c; font-weight: bold; white-space: nowrap; }
`

const IO = styled.div`
  display: flex;
  flex-direction: column;
  gap: 3px;
  padding: 4px 4px 0 3px;
`

const Analog = styled(Key)`
  flex: none;
  width: 100%;
  height: 15px;
  padding: 0 1px;
  span { flex: 1; border-right: 1px solid #2c2c2c; font-weight: bold; }
`

const Readout = styled.div`
  display: grid;
  grid-template-columns: auto 1fr auto;
  align-items: center;
  height: ${(p) => (p.$single ? 17 : 29)}px;
  margin-top: ${(p) => (p.$single ? 2 : 5)}px;
  padding: 0 4px;
  border: 2px solid #161616;
  background: #000;
  color: #63cd7f;
  span { text-align: right; white-space: nowrap; }
  span:first-child { text-align: left; }
`

const Knob = styled.span`
  display: flex;
  align-items: center;
  gap: 2px;
`

const SideButtons = styled.div`
  display: flex;
  flex-direction: column;
  align-items: center;
  gap: 5px;
  padding-top: 3px;
`

const TargetButton = styled.button`
  display: flex;
  align-items: center;
  justify-content: center;
  width: 16px;
  height: 16px;
  border: 1px solid #777;
  border-radius: 2px;
  background: ${(p) => (p.$hot ? "#d1402c" : "#333")};
  color: ${(p) => (p.$hot ? "#ffd5cc" : "#b4b4b4")};
`

const tickSets = {
  click: "M4 24.5H13M6 35.5H13M7 45.5H13M8 55.5H13M10 63.5H13M11 70.5H13",
  mono: "M9 17.5H13M5 46.5H13M9 75.5H13",
  stereo: "M10 9.5H13M11 14.5H13M5 23.5H13M11 32.5H13M10 38.5H13M10 50.5H13M11 59.5H13M5 68.5H13M11 77.5H13M10 83.5H13",
}

const Scale = ({ kind }) => (
  kind === "keys" ? (
    <svg width="13" height="94" viewBox="0 0 13 94">
      <path d="M0 0H13V94H0Z" fill="#e2e2e2"/>
      <path d={range(23).filter((i) => i % 7 !== 3).map((i) => `M0 ${i * 4 + 3.5}H8`).join("")} stroke="#111" strokeWidth="2"/>
    </svg>
  ) : (
    <svg width="13" height="94" viewBox="0 0 13 94">
      <path d="M0 0H13V94H0Z" fill="#333"/>
      <path d="M0 0H1V94H0Z" fill="#111"/>
      <path d={tickSets[kind]} stroke="#666"/>
    </svg>
  )
)

const BLUE = "#1d3763"
const tracks = [
  { name: "Click 1", color: "#3d5219", view: "volume", input: "no input", inserts: { 0: "Click II" }, scale: "click", kind: "click" },
  { name: "PIANO.03", color: "#7d5a22", view: "clips", input: "no input", inserts: { 0: "Mini Grand" }, scale: "keys", kind: "inst", stereo: true, comped: true },
  { name: "Inst 1", color: "#7d5a22", view: "clips", input: "no input", scale: "keys", kind: "inst", stereo: true },
  { name: "DGVOXIDEAS04", color: BLUE, view: "waveform", input: "MIC/LINE/HIZ/M", inserts: { 0: "Auto-Tune" }, scale: "mono", comped: true },
  { name: "JESEVOXIDEAS", color: BLUE, view: "waveform", input: "MIC/LINE/HIZ/M", scale: "mono", selected: true },
  { name: "BrnthDnchID(S)", color: BLUE, view: "waveform", input: "MIC/LINE/HIZ/M", scale: "stereo", stereo: true, muted: true, poly: true },
  { name: "BrnthDnchID(S)", color: BLUE, view: "waveform", input: "MON L/R", scale: "stereo", stereo: true },
  { name: "DG BG 1", color: BLUE, view: "waveform", input: "MIC/LINE/HIZ/M", inserts: { 2: "Auto-Tune" }, scale: "mono", muted: true },
  { name: "Audio 2", color: BLUE, view: "waveform", input: "MON L/R.L", scale: "mono" },
  { name: "Audio 3", color: BLUE, view: "waveform", input: "MON L/R.R", scale: "mono" },
  { name: "Master 1", color: "#43131a", view: "volume", scale: "click", kind: "master", stereo: true },
]

function InsertSlots({ items = {} }) {
  return (
    <Slots>
      {range(5).map((i) => items[i]
        ? <Insert key={i}><i/><span>{items[i]}</span></Insert>
        : <Slot key={i}><i/></Slot>)}
    </Slots>
  )
}

const Stand = () => <Stroke w={8} h={10} width={1.3} d="M4 0V6M0 9H8M2 9L4 5L6 9"/>
const Left = () => <Fill w={3} h={5} d="M3 0V5L0 2.5Z"/>
const Right = () => <Fill w={3} h={5} d="M0 0V5L3 2.5Z"/>

function TrackStrip({ track }) {
  const { name, kind, stereo } = track
  const master = kind === "master"
  const click = kind === "click"
  const inst = kind === "inst"

  return (
    <Strip>
      <ColorTab $c={track.color}>
        <svg width="10" height="10" viewBox="0 0 10 10"><circle cx="5" cy="5" r="5" fill="currentColor"/><path d="M2.5 4H7.5L5 7Z" fill="#222"/></svg>
        <Elastic/>
      </ColorTab>

      <Controls>
        <NameBar $on={track.selected}>
          <span>{name}</span>
          {!click && !master && <NameMenu $on={track.comped} aria-label="playlists"><Caret/></NameMenu>}
        </NameBar>
        {!master && (
          <Squares>
            {click ? <><Square $off/><Square $off/></> : (
              <><Square $rec aria-label="record arm"><svg width="9" height="9"><circle cx="4.5" cy="4.5" r="4.5" fill="#dcdcdc"/></svg></Square><Square>I</Square></>
            )}
            <Square $off={click}>S</Square>
            <Square $hot={track.muted}>M</Square>
          </Squares>
        )}
        <Line><Dropdown label="track view" value={track.view}/></Line>
        {!master && (
          <Line>
            <Key $w={11} aria-label="freeze"><Stroke w={9} h={9} width={1.3} d="M4.5 0V9M.6 2.2L8.4 6.8M.6 6.8L8.4 2.2"/></Key>
            <Key $w={27} $dim={click || inst}>dyn</Key>
            <Dropdown label="automation" value="read" $green/>
          </Line>
        )}
        <Line>
          <Key $w={11} aria-label="timebase">{click || inst || track.poly ? <Metronome/> : <Clock size={9}/>}</Key>
          {master && <Dropdown label="automation" value="auto read" $green/>}
          {inst && <Key><Grow/>none<Grow/><Windows/></Key>}
          {track.poly && <Key><Stand/><Grow/>Polyphonic<Grow/><svg width="8" height="5"><path d="M0 0H5V5H0Z" fill="#4fbf74"/></svg></Key>}
          {!kind && !track.poly && <Row $gap={2}><i/><Stand/></Row>}
        </Line>
      </Controls>

      <Meter $stereo={stereo}><i/>{stereo && <i/>}</Meter>
      <InsertSlots items={track.inserts}/>
      <InsertSlots/>
      {master ? <span/> : (
        <Slots $left={3}>{["a", "b", "c", "d", "e"].map((s) => <Slot key={s}>{s}</Slot>)}</Slots>
      )}

      <IO>
        {track.input && <Line $h={15}><Dropdown label="input" value={track.input} $h={15}/></Line>}
        <Analog><span>Analog 1-2</span><Fader/></Analog>
        <Readout $single={master}>
          <span>vol</span><span/><span>0.0</span>
          {!master && (stereo
            ? <><Knob><Left/>100</Knob><span/><Knob>100<Right/></Knob></>
            : <><span>pan</span><span/><Knob><Right/><i/>0<i/><Left/></Knob></>)}
        </Readout>
      </IO>

      <SideButtons>
        <TargetButton $hot={track.selected} aria-label="track input"><Target/></TargetButton>
        <Comment/>
        <Key $w={13} $h={13} aria-label="add"><Stroke w={9} h={9} width={2} color="#e2e2e2" d="M4.5 0V9M0 4.5H9"/></Key>
      </SideButtons>
      <Scale kind={track.scale}/>
    </Strip>
  )
}

/* ---------- timeline ---------- */

const Rulers = styled.div`
  ${rulerRows}
  position: relative;
  overflow: hidden;
  font-weight: bold;
`

const Ruler = styled.div`
  position: relative;
  overflow: hidden;
  border-bottom: 1px solid #1f2426;
  background: ${(p) => p.$bg};
  color: ${(p) => p.$c || "#a8a8a8"};
`

const Mark = styled.span`
  position: absolute;
  top: 0;
  height: 16px;
  padding-left: ${(p) => p.$pad || 3}px;
  border-left: 1px solid ${(p) => p.$line || "#2c2c2c"};
  line-height: 16px;
  white-space: nowrap;
`

const Flag = styled.span`
  position: absolute;
  top: 1px;
  display: flex;
  gap: 3px;
  margin-left: -4px;
  color: #e4e4e4;
`

const GridHead = styled.div`
  height: 17px;
  padding: 2px 0;
  background: linear-gradient(#161616, #262626);
  border-bottom: 1px solid #111;
  overflow: hidden;
`

const Lanes = styled.div`
  position: relative;
  overflow: hidden;
`

const Lane = styled.div`
  ${rowHeight}
  position: relative;
  overflow: hidden;
  border-bottom: 1px solid #383838;
  background: ${(p) => p.$bg || "#4f4f4f"};
`

const MarkerLine = styled.i`
  position: absolute;
  top: 0;
  bottom: 0;
  width: 2px;
  background: ${(p) => p.$c};
`

const Layer = styled.svg`
  position: absolute;
  inset: 0;
  width: 100%;
  height: 100%;
`

const ClipBox = styled.div`
  position: absolute;
  top: 0;
  display: flex;
  flex-direction: column;
  justify-content: space-between;
  align-items: flex-start;
  height: 92px;
  padding: 1px;
  overflow: hidden;
  border: 1px solid #050505;
  background: ${(p) => p.$bg};
  color: #dedede;
  font-weight: bold;
`

const Label = styled.span`
  position: relative;
  display: flex;
  align-items: center;
  gap: 4px;
  max-width: 100%;
  padding: 0 2px;
  overflow: hidden;
  border-radius: 1px;
  background: rgba(0, 0, 0, 0.6);
  white-space: nowrap;
`

function Grid({ offset = 0, fine = "#585859", bar = "#65656d" }) {
  return (
    <Layer>
      <g transform={`translate(${-offset})`} fill="none">
        <path d={GRID_FINE} stroke={fine}/>
        <path d={GRID_BAR} stroke={bar}/>
      </g>
    </Layer>
  )
}

// repeatable jitter so the peaks keep their shape between renders
const jitter = (i) => {
  const s = Math.sin(i * 127.1 + 311.7) * 43758.5453
  return s - Math.floor(s)
}

// points: "x:amp x:amp ...", unit: px per source tick
const wave = (points, mid, unit = 0.4974, amp = 1 / 3, rough = 0.45) => {
  const pts = points.split(" ").map((p) => p.split(":").map(Number))
  const up = []
  const down = []
  for (let i = 0; i < pts.length - 1; i++) {
    const [x0, a0] = pts[i]
    const [x1, a1] = pts[i + 1]
    for (let x = x0; x < x1; x += 2) {
      const a = (a0 + (a1 - a0) * (x - x0) / (x1 - x0)) * amp
      const px = (x * unit).toFixed(1)
      up.push(`${px} ${(mid - Math.max(0.5, a * (1 - rough * jitter(x)))).toFixed(1)}`)
      down.unshift(`${px} ${(mid + Math.max(0.5, a * (1 - rough * jitter(x + 7)))).toFixed(1)}`)
    }
  }
  return `M${up.join("L")}L${down.join("L")}Z`
}

const VOX = "0:.5 34:1 36:5 48:5 50:1 90:1 92:5 108:5 110:1 194:1 198:16 206:8 216:32 226:16 236:22 244:10 254:26 266:18 281:20 294:18 298:4 308:16 321:4 324:1 341:1 348:12 368:20 376:5 381:12 406:16 416:8 446:8 466:10 496:6 504:4 509:22 518:9 528:28 536:11 546:28 554:12 586:13 596:6 614:3 626:1 641:5 664:10 676:16 684:2 691:10 711:10 721:2 726:8 771:10 781:5 801:17 816:10 834:3 851:3 871:17 882:7 886:2 896:8 908:16 921:13 966:17 976:10 991:3 998:6 1011:16 1038:18 1056:10 1076:8 1096:13 1116:13 1127:30 1136:18 1161:15 1176:8 1196:5 1201:1 1248:1 1256:11 1271:15 1286:8 1306:13 1336:10 1366:8 1406:5 1414:1 1450:1"
const BG_1 = "0:26 4:6 10:24 14:8 21:24 27:10 33:22 38:42 46:46 52:26 72:24"
const BG_2 = "0:1 33:1 34:4 36:1 66:2 72:32 76:5 80:28 84:8 90:22 94:8 100:24 104:24 109:46 113:22 119:48 124:26 146:26"
const BG_3 = "0:24 8:22 14:16 20:3 22:1 58:1 60:4 62:1 208:1 216:30 222:18 226:28 232:8 238:26 250:22 254:48 262:44 268:26 280:20 296:18 308:8 316:1"

// full-scale program audio: two bands with ragged edges
const band = (width, top, bottom, rough) => {
  const xs = range(Math.floor(width))
  return `M${xs.map((x) => `${x} ${(top + jitter(x) * jitter(x + 3) * rough).toFixed(1)}`).join("L")}L${xs.reverse().map((x) => `${x} ${(bottom - jitter(x + 50) * jitter(x + 9) * rough).toFixed(1)}`).join("L")}Z`
}

const burnWave = band(35, 13, 35, 5) + band(35, 57, 81, 5)
const synthEnvelope = range(48).map((i) => `${i * 10}:${i % 2 ? 30 + jitter(i) * 8 : 40 + jitter(i) * 14}`).join(" ")
const synthTail = `${synthEnvelope} 480:38 500:46 530:40 550:52 562:58 575:44 580:20 582:2 590:1`
const synthWave = wave(synthTail, 23, 0.4974, 1 / 3, 0.2) + wave(synthTail, 68, 0.4974, 1 / 3, 0.2)

const PIANO_A = {
  start: -12, unit: 0.5995, top: 45,
  rows: {
    65: "617-654,662-701,708-722,859-895,904-958",
    71: "739-776,783-821,829-848,980-1013,1221-1251",
    83: "949-965",
    95: "195-230,497-522,542-575,587-603,617-654,662-701,708-722,739-776,783-821,829-850,859-895,904-963,980-1010,1024-1063,1070-1093,1099-1124,1144-1184,1191-1208,1221-1253,1340-1378",
    100: "20-60,240-295,1024-1063,1070-1093,1265-1305,1311-1332",
    112: "1099-1124,1130-1136,1144-1184,1191-1206,1340-1371,1384-1425",
    118: "617-640,647-654,662-684,692-701,708-722,859-881,889-895,904-926,933-943,950-963",
    124: "20-52,60-64,75-105,120-152,195-217,226-276,286-297,316-344,361-401,497-522,543-558,570-575,587-594,603-606,739-761,768-775,783-805,813-821,829-848,980-1001,1009-1016,1024-1046,1053-1062,1069-1076,1084-1087,1093-1097,1221-1243,1250-1257,1265-1289,1295-1305,1311-1336,1508-1566",
    130: "1144-1160,1176-1183,1191-1205",
    136: "166-173,1384-1425",
    142: "195-207,218-225",
    153: "28-43,52-55,120-140,149-152,240-271,361-413",
    165: "75-94,195-213,316-330,338-343,497-512,517-520,542-553,557-572,579-587,739-754,760-776,783-790,797-813,820-825,980-990,1002-1006,1221-1236,1243-1251,1508-1558",
    177: "120-141,361-384",
    183: "1099-1114,1122-1127,1340-1354,1362-1369",
    188: "75-89,97-105,316-333,617-636,641-653,662-671,676-692,699-709,724-727,859-874,879-895,904-912,919-934,941-952,964-968,1508-1550",
    194: "28-33,45-49,240-295,1024-1034,1084-1092,1265-1317,1325-1333",
    200: "1144-1153,1159-1176,1182-1199,1206-1209",
    206: "1384-1425",
    217: "67-72",
    236: "195-219,497-522,542-595,739-831,980-1011,1221-1255",
    247: "120-170,361-414",
    253: "1099-1127,1340-1372",
    259: "75-102,316-345,617-722,859-963,1508-1554",
    265: "20-52,240-295,1024-1090,1265-1332",
    270: "1144-1204",
    276: "1384-1425",
  },
}

const PIANO_B = {
  start: 928, unit: 0.6122, top: 45,
  rows: {
    94: "1075-1106,1311-1345",
    100: "1120-1182,1356-1411",
    124: "15-50,59-96,175-233,248-286,294-330,366-400,412-475,485-520,530-592,603-637,648-713,721-758,766-830,839-874,884-919,957-992,1002-1049,1075-1104,1120-1172,1179-1183,1193-1225,1238-1271,1311-1333,1342-1391,1401-1411,1431-1458,1474-1513",
    135: "104-122,338-357,575-595,693-714,810-834,928-951,1047-1054,1283-1290,1519-1528",
    141: "1075-1091,1106-1109,1311-1326,1334-1343",
    153: "15-52,248-287,366-404,485-522,603-636,721-757,839-877,957-994,1120-1140,1150-1163,1172-1174,1238-1257,1268-1272,1356-1387,1474-1527",
    165: "59-82,175-224,294-316,412-475,530-595,648-714,766-805,884-917,1002-1049,1075-1085,1098-1101,1193-1212,1311-1330,1431-1444,1452-1456",
    176: "1238-1260,1474-1495,1511-1526",
    188: "59-89,95-100,175-219,294-326,330-335,412-464,530-579,648-698,766-794,884-909,921-934,942-947,1002-1048,1193-1207,1215-1225,1431-1446",
    194: "15-30,37-43,248-264,271-278,366-382,389-394,485-501,507-512,603-628,721-735,743-750,839-856,862-870,957-970,979-986,1120-1137,1150-1155,1165-1168,1356-1410",
    218: "1187-1191",
    235: "1075-1098,1311-1335",
    247: "1238-1287,1474-1526",
    259: "59-112,175-221,294-348,412-470,530-582,648-703,766-822,884-944,1002-1048,1193-1222,1431-1460",
    265: "15-44,248-279,366-396,485-512,603-628,721-748,839-870,957-986,1120-1170,1356-1410",
  },
}

const INST = {
  start: -12, unit: 0.5995, top: 329,
  rows: {
    349: "737-776,1220-1258",
    361: "783-826,836-850,904-963,1144-1185,1265-1308,1317-1332,1386-1446",
    373: "617-647,737-768,858-887,949-965,1099-1130,1191-1201,1220-1250,1340-1369,1432-1446",
    379: "483-487,542-593,602-606,783-820,829-850,1024-1076,1086-1089,1265-1302,1311-1332",
    385: "662-700,709-716,904-963,1144-1185,1191-1198,1386-1446",
    397: "617-646,858-887,1099-1128,1340-1369",
    402: "450-467,475-489,495-515,526-532,542-560,570-587,594-603,737-755,767-773,783-812,821-832,836-850,978-998,1008-1015,1024-1042,1052-1070,1076-1085,1220-1237,1250-1256,1265-1295,1303-1314,1317-1332",
    414: "662-681,690-698,709-716,904-961,1144-1163,1172-1180,1191-1198,1386-1445",
    426: "617-621,646-649,858-886,1099-1103,1340-1367",
    455: "662-671,676-692,699-705,904-960,1144-1154,1159-1174,1181-1187,1386-1443",
    466: "490-494,611-630,638-647,858-874,881-889,1093-1097,1099-1114,1122-1130,1340-1358,1362-1372",
    472: "467-476,542-579,587-596,783-796,814-838,842-850,1024-1061,1070-1079,1265-1278,1296-1320,1325-1332",
    514: "495-511,519-524,731-734,737-747,759-765,978-993,1001-1006,1213-1216,1220-1234,1241-1248",
    525: "662-708,904-960,1144-1190,1386-1443",
    537: "617-642,858-889,1099-1124,1340-1372",
    543: "542-597,775-777,783-851,1024-1079,1257-1259,1265-1332",
    584: "737-760,1220-1243",
  },
}

const notesPath = ({ start, unit, top, rows }) =>
  Object.entries(rows).map(([y, list]) => list.split(",").map((pair) => {
    const [a, b] = pair.split("-").map((v) => start + v * unit)
    return `M${a.toFixed(1)} ${Math.round((y - top) / 3)}H${b.toFixed(1)}`
  }).join("")).join("")

const pianoNotes = notesPath(PIANO_A) + notesPath(PIANO_B)
const instNotes = notesPath(INST)

const midi = { bg: "#2b3844", fine: "#455462", notes: pianoNotes, note: "#5b9fd0" }
const ghost = { bg: "#383a40", fine: "#4b4d54", notes: instNotes, note: "#7d7a78" }
const vox = { bg: "#2a3f33", fine: "#456353", peaks: "#67ad85", db: true }
const burn = { bg: "#403d22", fine: "#5c5833", peaks: "#afa354", d: burnWave, db: true }
const synth = { bg: "#474747", fine: "#5a5a5a", peaks: "#787878", db: true }
const bgv = { bg: "#3d273d", fine: "#5f435f", peaks: "#9c4f9b", db: true }

const lanes = [
  { line: "#c5e878", below: "#4c4e49" },
  {
    bg: "#343c47", clips: [
      [-2, 241, "", midi], [241, 286, "PIANO.03-01", midi], [285, 866, "PIANO.03-02", midi],
      [865, 1009, "PIANO.02-49", midi], [1008, 1153, "PIANO.02-32", midi], [1152, 2400, "PIANO.02-28", midi],
    ],
  },
  { bg: "#343a44", clips: [[249, 286, "PIANO.02-33", ghost], [285, 358, "PIANO.02-34", ghost], [357, 574, "PIANO.02-36", ghost], [573, 858, "PIANO.02-29", ghost]] },
  {},
  { clips: [[160, 882, "JESSE VOX IDEAS_02", { ...vox, d: wave(VOX, 45) }]] },
  { center: true, clips: [[249, 286, "Burn the Dancehall", burn], [321, 358, "Burn the Dancehall", burn], [466, 503, "Burn the Dancehall", burn]] },
  { center: true, clips: [[575, 871, "Burn the Dancehall Down cool post chrs (Synth)-03", { ...synth, d: synthWave }], [1007, 1016, "", { ...synth, db: false, d: "M1 68H7V70H1ZM1 22V24H7V22Z" }]] },
  { clips: [[249, 286, "DG BG 1_01", { ...bgv, d: wave(BG_1, 45) }], [285, 358, "DG BG 1_01-02", { ...bgv, d: wave(BG_2, 45) }], [357, 516, "DG BG 1_01-03", { ...bgv, d: wave(BG_3, 45) }]] },
  {}, {},
  { line: "#cf6f74", below: "#4d494b" },
]

const markers = [[286, "C1", "#f09ad8", "#b3689f"], [864, "V2", "#f5bb33", "#c08f3c"], [1008, "V2", "#f5bb33", "#c08f3c"], [1587, "BV2", "#96e03f", "#8fae4f"]]

function Clip({ clip: [from, to, label, style] }) {
  return (
    <ClipBox $bg={style.bg} style={{ left: from, width: to - from }}>
      <Grid offset={from + 1} fine={style.fine} bar={style.fine}/>
      <Layer>
        {style.notes && <path d={style.notes} transform={`translate(${-from - 1})`} stroke={style.note} strokeWidth="2"/>}
        {style.d && <path d={style.d} fill={style.peaks}/>}
      </Layer>
      {label ? <Label>{label}</Label> : <i/>}
      {style.db && <Label><Fader/>0 dB</Label>}
    </ClipBox>
  )
}

const clockText = (s) => `${Math.floor(s / 60)}:${String(s % 60).padStart(2, "0")}`

function Timeline() {
  return (
    <Column $bg="#292929">
      <Rulers>
        <Ruler $bg="#3a3a3a">
          {range(26).map((i) => <Mark key={i} style={{ left: Math.round(barX(15 + i)) }}>{15 + i}</Mark>)}
          <Layer>
            <path d="M87.5 16V1H94L89 6V16" fill="#eee" stroke="#111"/>
            <path d="M169 16V1H163L168 6V16" fill="#eee" stroke="#111"/>
            <path d="M155 0H158V16L153 10H155ZM160 0H163V10H166L160 16Z" fill="#3f8fd0"/>
          </Layer>
        </Ruler>
        <Ruler $bg="#2b2b2b" $c="#7f7f7f">
          {range(42).map((i) => (
            <Mark key={i} $line="#343434" $pad={2} style={{ left: Math.round(28 + (i - 1) * 2 * SECOND) }}>{clockText(42 + i * 2)}</Mark>
          ))}
        </Ruler>
        <Ruler $bg="#2a6247"/>
        <Ruler $bg="#295a71" $c="#86b7c8"><Mark $line="transparent" style={{ left: 895 }}>Default: 4/4</Mark></Ruler>
        <Ruler $bg="#242424">
          {markers.map(([x, text, color]) => (
            <Flag key={x} style={{ left: x }}>
              <Fill w={8} h={11} color={color} d="M0 0H8V7L4 11L0 7Z"/>{text}
            </Flag>
          ))}
        </Ruler>
      </Rulers>
      <GridHead>
        <svg width="100%" height="14" fill="none"><path d={GRID_FINE} stroke="#36363a"/><path d={GRID_BAR} stroke="#4a4a52"/></svg>
      </GridHead>
      <Lanes>
        {lanes.map((lane, i) => (
          <Lane key={i} $bg={lane.bg}>
            {lane.below && <Layer><rect y="25" width="100%" height="70" fill={lane.below}/></Layer>}
            <Grid fine={lane.bg ? "#414953" : undefined} bar={lane.bg ? "#4c5464" : undefined}/>
            {lane.center && <Layer><path d="M0 45.5H4000" stroke="#464646"/></Layer>}
            {lane.line && <Layer><rect y="23" width="100%" height="2" fill={lane.line}/></Layer>}
            {markers.map(([x, , , color]) => <MarkerLine key={x} $c={color} style={{ left: x - 1 }}/>)}
            {lane.clips?.map((clip, n) => <Clip key={n} clip={clip}/>)}
          </Lane>
        ))}
      </Lanes>
      <Playhead/>
      <Grow/>
      <TimeScroll>
        <Thumb/>
        <Row $gap={8} $push>
          <Fill w={5} h={6} d="M5 0V6L0 3Z"/><Fill w={9} h={6} d="M4 0V6L9 3Z"/><Stroke w={6} h={6} width={1} d="M0 3H6"/><Stroke w={6} h={6} width={1} d="M0 3H6M3 0V6"/><Fill w={7} h={6} d="M0 0L5 3L0 6ZM6 0H7V6H6Z"/>
        </Row>
      </TimeScroll>
    </Column>
  )
}

const Playhead = styled.i`
  position: absolute;
  left: 155px;
  top: 17px;
  width: 1px;
  height: 82px;
  background: #a14b2f;
`

const ScrollRow = styled.div`
  display: flex;
  align-items: center;
  gap: 8px;
  height: 15px;
  padding: 0 4px;
  background: #292929;
  color: #7d7d7d;
`

const TimeScroll = styled(ScrollRow)`
  padding: 0 4px 0 12px;
  background: #1e1e1e;
`

const Thumb = styled.i`
  width: 33%;
  height: 6px;
  margin-left: 17%;
  background: #3a3a3a;
`

const RightRail = styled(Column)`
  align-items: center;
  gap: 9px;
  padding: 3px 0 24px;
  background: linear-gradient(90deg, #1c1c1c, #272727);
  color: #777;
`

const RailTrack = styled.i`
  flex: 1;
  width: 7px;
  background: #161616;
`

const RailTop = styled.div`
  display: flex;
  flex-direction: column;
  align-items: center;
  justify-content: space-between;
  height: 97px;
`

const Plus = () => <Stroke w={5} h={5} width={1} d="M0 2.5H5M2.5 0V5"/>

function EditWindow() {
  return (
    <Edit>
      <Column>
        <RulerNames>
          <RulerName $on><Row $gap={2}><Stroke w={12} h={10} width={1} d="M.5 .5H11.5V9.5H.5ZM.5 3.5H11.5M.5 6.5H11.5"/><Caret/></Row>Bars|Beats</RulerName>
          <RulerName><i/>Min:Secs</RulerName>
          <RulerName><Row $gap={8}><i/><Fill w={5} h={7} d="M0 0V7L5 3.5Z"/></Row>Tempo<i/><Plus/></RulerName>
          <RulerName><i/>Meter<i/><Plus/></RulerName>
          <RulerName><Row $gap={2}><Comment/></Row>Markers<Target/><Plus/></RulerName>
        </RulerNames>
        <ColumnHeads>
          <ColumnHead $wide>
            <Row $gap={2}><Stroke w={12} h={9} width={1} d="M.5 .5H11.5V8.5H.5ZM3.5 0V9M6.5 0V9M9.5 0V9"/><Caret color="#888"/></Row>
            <Row $gap={1}><Clock/><Caret color="#888"/></Row>
          </ColumnHead>
          <ColumnHead>INSERTS A-E</ColumnHead>
          <ColumnHead>INSERTS F-J</ColumnHead>
          <ColumnHead>SENDS A-E</ColumnHead>
          <ColumnHead>I / O</ColumnHead>
          <ColumnHead><Fill w={8} h={10} color="#f2bd35" d="M0 0H8V6L4 10L0 6Z"/></ColumnHead>
          <ColumnHead/>
        </ColumnHeads>
        <div>{tracks.map((track, i) => <TrackStrip key={i} track={track}/>)}</div>
        <Grow/>
        <ScrollRow>
          <Stroke w={8} h={8} width={1} d="M7.5 0V8M0 4H6M3 1L0 4L3 7"/>
          <Stroke w={8} h={8} width={1} d="M0 .5H8M4 2V8M1 5L4 8L7 5"/>
        </ScrollRow>
      </Column>
      <Timeline/>
      <RightRail>
        <RailTop>
          <Stroke w={8} h={11} width={1} d="M4 8V0M2 3L4 0L6 3M0 10H8"/>
          <SortBadge c="#b8902c"/>
        </RailTop>
        <WaveGlyph w={10} h={10}/>
        <Stroke w={10} h={9} width={2} d="M0 2H5M4 7H9"/>
        <RailTrack/>
        <Fill w={6} h={4} d="M3 0L6 4H0Z"/>
        <Caret/>
        <Stroke w={6} h={6} width={1} d="M0 3H6"/>
        <Plus/>
      </RightRail>
    </Edit>
  )
}

/* ---------- bottom tabs ---------- */

const TabBar = styled.nav`
  display: flex;
  align-items: stretch;
  height: 20px;
  margin: 0 0 4px 4px;
  background: #171717;
`

const TabMenu = styled.button`
  display: flex;
  align-items: center;
  padding: 0 5px;
`

const Tab = styled.button`
  display: flex;
  align-items: center;
  gap: 10px;
  padding: 0 14px 3px 14px;
  border-right: 1px solid #111;
  background: #222;
  color: ${(p) => (p.$lit ? "#a5a5a5" : "#535353")};
  font-weight: bold;
`

const tabs = ["MIDI EDITOR", "CLIP EFFECTS", "MELODYNE", "RX SPECTRAL EDITOR", "SPECTRALAYERS", "WAVELAB", "ACOUSTICA", "DYNASSIST"]

function App() {
  return (
    <Page>
      <GlobalStyle/>
      <TopBar/>
      <Body>
        <SideBar/>
        <Main>
          <Overview/>
          <EditWindow/>
        </Main>
      </Body>
      <TabBar>
        <TabMenu aria-label="dock menu"><MenuDot/></TabMenu>
        {tabs.map((tab, i) => <Tab key={tab} $lit={i < 2}>{tab}{i > 0 && <PopOut lit={i === 1}/>}</Tab>)}
      </TabBar>
    </Page>
  )
}

export default App
